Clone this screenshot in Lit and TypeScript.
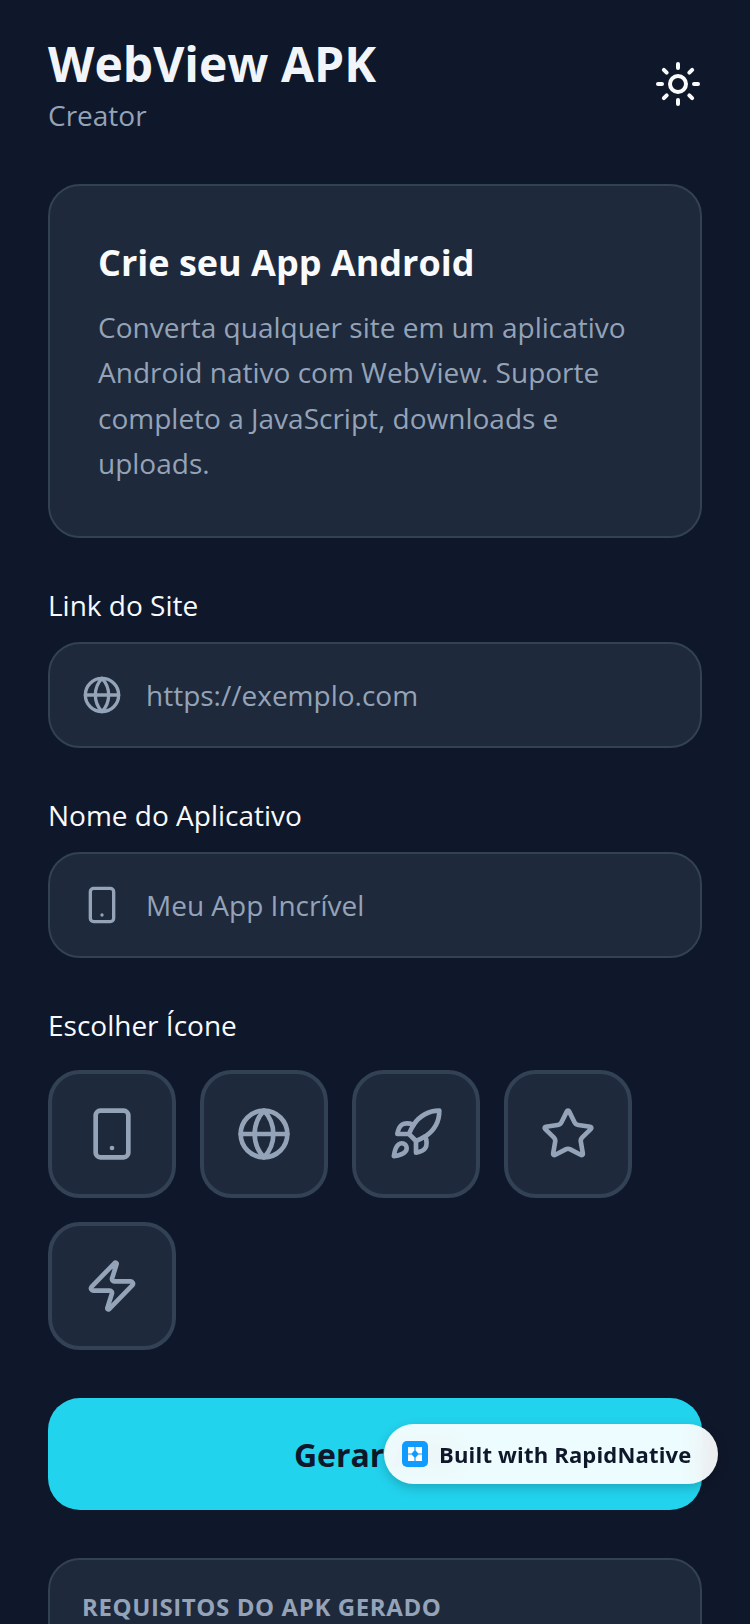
import { LitElement, html, css, svg } from "lit";
import { customElement } from "lit/decorators.js";

const icon = (size: number, body: unknown, cls = "") =>
  html`<svg class=${cls} width=${size} height=${size} viewBox="0 0 24 24" fill="none" stroke="currentColor" stroke-width="2" stroke-linecap="round" stroke-linejoin="round">${body}</svg>`;

const globe = svg`<circle cx="12" cy="12" r="10"/><path d="M12 2a14.5 14.5 0 0 0 0 20 14.5 14.5 0 0 0 0-20"/><path d="M2 12h20"/>`;
const phone = svg`<rect x="5" y="2" width="14" height="20" rx="2" ry="2"/><path d="M12 18h.01"/>`;
const rocket = svg`<path d="M4.5 16.5c-1.5 1.26-2 5-2 5s3.74-.5 5-2c.71-.84.7-2.13-.09-2.91a2.18 2.18 0 0 0-2.91-.09z"/><path d="m12 15-3-3a22 22 0 0 1 2-3.95A12.88 12.88 0 0 1 22 2c0 2.72-.78 7.5-6 11a22.35 22.35 0 0 1-4 2z"/><path d="M9 12H4s.55-3.03 2-4c1.62-1.08 5 0 5 0"/><path d="M12 15v5s3.03-.55 4-2c1.08-1.62 0-5 0-5"/>`;
const star = svg`<path d="M11.525 2.295a.53.53 0 0 1 .95 0l2.31 4.679a2.123 2.123 0 0 0 1.595 1.16l5.166.756a.53.53 0 0 1 .294.904l-3.736 3.638a2.123 2.123 0 0 0-.611 1.878l.882 5.14a.53.53 0 0 1-.771.56l-4.618-2.428a2.122 2.122 0 0 0-1.973 0L6.396 21.01a.53.53 0 0 1-.77-.56l.881-5.139a2.122 2.122 0 0 0-.611-1.879L2.16 9.795a.53.53 0 0 1 .294-.906l5.165-.755a2.122 2.122 0 0 0 1.597-1.16z"/>`;
const zap = svg`<path d="M4 14a1 1 0 0 1-.78-1.63l9.9-10.2a.5.5 0 0 1 .86.46l-1.92 6.02A1 1 0 0 0 13 10h7a1 1 0 0 1 .78 1.63l-9.9 10.2a.5.5 0 0 1-.86-.46l1.92-6.02A1 1 0 0 0 11 14z"/>`;
const sun = svg`<circle cx="12" cy="12" r="4"/><path d="M12 2v2"/><path d="M12 20v2"/><path d="m4.93 4.93 1.41 1.41"/><path d="m17.66 17.66 1.41 1.41"/><path d="M2 12h2"/><path d="M20 12h2"/><path d="m6.34 17.66-1.41 1.41"/><path d="m19.07 4.93-1.41 1.41"/>`;

@customElement("app-root")
export class AppRoot extends LitElement {
  static styles = css`
    :host {
      display: block;
      position: relative;
      height: 1624px;
      overflow: hidden;
      background: #0f172a;
      font-family: "Open Sans", sans-serif;
      color: #f8fafc;
    }
    .page { padding: 32px 48px 0; display: flex; flex-direction: column; }
    .header { display: flex; justify-content: space-between; align-items: center; margin-bottom: 48px; }
    h1 { margin: 0; font-size: 48px; line-height: 64px; font-weight: 700; color: #f1f5f9; }
    .sub { font-size: 28px; line-height: 38px; margin-bottom: 2px; color: #94a3b8; }
    .sun { color: #f8fafc; display: block; }
    .card {
      background: #1e293b;
      border: 2px solid #334155;
      border-radius: 32px;
      height: 354px;
      box-sizing: border-box;
      padding: 48px 48px 0;
      margin-bottom: 48px;
    }
    h2 { margin: 0 0 13px; font-size: 36px; line-height: 58px; font-weight: 700; color: #f8fafc; }
    .card p { margin: 0; font-size: 28px; line-height: 45.4px; color: #94a3b8; }
    label { display: block; font-size: 28px; line-height: 38px; margin-bottom: 18px; color: #f8fafc; }
    label.gap { margin-bottom: 26px; }
    .field {
      display: flex;
      align-items: center;
      gap: 24px;
      height: 106px;
      box-sizing: border-box;
      padding: 0 32px;
      background: #1e293b;
      border: 2px solid #334155;
      border-radius: 32px;
      margin-bottom: 48px;
      color: #94a3b8;
      font-size: 28px;
    }
    .field svg { flex: none; display: block; }
    .tiles { display: flex; flex-wrap: wrap; gap: 24px; margin-bottom: 48px; }
    .tile {
      width: 128px;
      height: 128px;
      box-sizing: border-box;
      border: 4px solid #334155;
      border-radius: 32px;
      background: #1e293b;
      color: #94a3b8;
      display: flex;
      align-items: center;
      justify-content: center;
    }
    .tile svg { display: block; }
    .cta {
      height: 112px;
      border-radius: 32px;
      background: #22d3ee;
      color: #0f172a;
      font-size: 32px;
      font-weight: 700;
      display: flex;
      align-items: center;
      justify-content: center;
      margin-bottom: 48px;
    }
    .req {
      background: #1e293b;
      border: 2px solid #334155;
      border-radius: 32px;
      padding: 31px 32px 32px;
      height: 300px;
    }
    .req h3 { margin: 0; font-size: 24px; line-height: 32px; font-weight: 700; letter-spacing: 0.6px; color: #94a3b8; }
    .badge {
      position: absolute;
      left: 384px;
      top: 1424px;
      width: 334px;
      height: 60px;
      box-sizing: border-box;
      border-radius: 30px;
      background: rgba(255, 255, 255, 0.92);
      backdrop-filter: blur(10px);
      box-shadow: 0 4px 12px rgba(0, 0, 0, 0.2);
      display: flex;
      align-items: center;
      gap: 11px;
      padding-left: 18px;
      font-size: 22px;
      font-weight: 700;
      letter-spacing: 0.18px;
      color: #0f172a;
    }
    .logo { flex: none; display: block; }
  `;

  render() {
    return html`
      <div class="page">
        <div class="header">
          <div>
            <h1>WebView APK</h1>
            <div class="sub">Creator</div>
          </div>
          ${icon(48, sun, "sun")}
        </div>
        <div class="card">
          <h2>Crie seu App Android</h2>
          <p>Converta qualquer site em um aplicativo Android nativo com WebView. Suporte completo a JavaScript, downloads e uploads.</p>
        </div>
        <label>Link do Site</label>
        <div class="field">${icon(40, globe)}<span>https://exemplo.com</span></div>
        <label>Nome do Aplicativo</label>
        <div class="field">${icon(40, phone)}<span>Meu App Incrível</span></div>
        <label class="gap">Escolher Ícone</label>
        <div class="tiles">
          ${[phone, globe, rocket, star, zap].map((b) => html`<div class="tile">${icon(56, b)}</div>`)}
        </div>
        <div class="cta">Gerar APK</div>
        <div class="req"><h3>REQUISITOS DO APK GERADO</h3></div>
      </div>
      <div class="badge">
        <svg class="logo" width="26" height="26" viewBox="0 0 26 26">
          <rect width="26" height="26" rx="5" fill="#0f9bff"/>
          <path d="M6 6h6.4v3.6l-2.8 2.8H6zM13.6 6H20v6.4h-3.6l-2.8-2.8zM6 13.6h3.6l2.8 2.8V20H6zM16.4 13.6H20V20h-6.4v-3.6z" fill="#fff"/>
        </svg>
        <span>Built with RapidNative</span>
      </div>
    `;
  }
}
